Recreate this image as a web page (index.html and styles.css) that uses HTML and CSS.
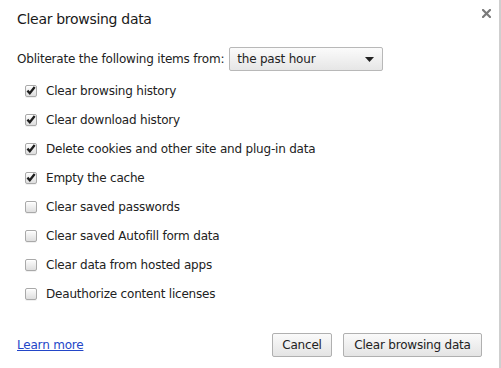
FILE: index.html
```html
<!DOCTYPE html>
<html>
<head>
<meta charset="utf-8">
<link rel="stylesheet" href="styles.css">
</head>
<body>
<div class="dialog">
  <button class="close" aria-label="Close">
    <svg width="9" height="9" viewBox="0 0 9 9"><path d="M1 1 L8 8 M8 1 L1 8" stroke="#7a7a7a" stroke-width="2.2" stroke-linecap="square"/></svg>
  </button>
  <h1 class="title">Clear browsing data</h1>
  <div class="period">
    <span class="period-label">Obliterate the following items from:</span>
    <div class="select">
      <span>the past hour</span>
      <svg class="caret" width="9" height="5" viewBox="0 0 9 5"><path d="M0 0 H9 L4.5 5 Z" fill="#222"/></svg>
    </div>
  </div>
  <ul class="items">
    <li class="item"><span class="box checked"><svg width="10" height="9" viewBox="0 0 10 9"><path d="M1.4 4.6 L3.8 7.2 L8.7 1" fill="none" stroke="#1e1e1e" stroke-width="2.3"/></svg></span>Clear browsing history</li>
    <li class="item"><span class="box checked"><svg width="10" height="9" viewBox="0 0 10 9"><path d="M1.4 4.6 L3.8 7.2 L8.7 1" fill="none" stroke="#1e1e1e" stroke-width="2.3"/></svg></span>Clear download history</li>
    <li class="item"><span class="box checked"><svg width="10" height="9" viewBox="0 0 10 9"><path d="M1.4 4.6 L3.8 7.2 L8.7 1" fill="none" stroke="#1e1e1e" stroke-width="2.3"/></svg></span>Delete cookies and other site and plug-in data</li>
    <li class="item"><span class="box checked"><svg width="10" height="9" viewBox="0 0 10 9"><path d="M1.4 4.6 L3.8 7.2 L8.7 1" fill="none" stroke="#1e1e1e" stroke-width="2.3"/></svg></span>Empty the cache</li>
    <li class="item"><span class="box"></span>Clear saved passwords</li>
    <li class="item"><span class="box"></span>Clear saved Autofill form data</li>
    <li class="item"><span class="box"></span>Clear data from hosted apps</li>
    <li class="item"><span class="box"></span>Deauthorize content licenses</li>
  </ul>
  <div class="footer">
    <a class="learn" href="#">Learn more</a>
    <div class="actions">
      <button class="btn btn-cancel">Cancel</button>
      <button class="btn btn-clear">Clear browsing data</button>
    </div>
  </div>
</div>
</body>
</html>
```
FILE: styles.css
```css
html, body {
  margin: 0;
  padding: 0;
  background: #fff;
}
.dialog {
  position: relative;
  width: 501px;
  height: 368px;
  box-sizing: border-box;
  border-right: 2px solid #cfcfcf;
  padding: 9px 17px 0 17px;
  font-family: "DejaVu Sans", "Liberation Sans", sans-serif;
  font-size: 12px;
  letter-spacing: -0.2px;
  color: #222;
  display: flex;
  flex-direction: column;
}
.close {
  position: absolute;
  top: 9px;
  left: 482px;
  width: 9px;
  height: 9px;
  padding: 0;
  border: 0;
  background: none;
  display: flex;
}
.title {
  margin: 0;
  font-size: 14px;
  letter-spacing: -0.3px;
  font-weight: normal;
  line-height: 20px;
  height: 20px;
  color: #1a1a1a;
}
.period {
  margin-top: 18px;
  display: flex;
  align-items: center;
  height: 24px;
}
.period-label {
  margin-right: 5px;
}
.select {
  width: 154px;
  height: 24px;
  box-sizing: border-box;
  border: 1px solid #b8b8b8;
  border-radius: 2px;
  background: linear-gradient(#fbfbfb, #e6e6e6);
  display: flex;
  align-items: center;
  justify-content: space-between;
  padding: 0 8px 0 7px;
}
.caret {
  display: block;
}
.items {
  list-style: none;
  margin: 5px 0 0 0;
  padding: 0 0 0 8px;
}
.item {
  height: 29px;
  display: flex;
  align-items: center;
}
.box {
  width: 12px;
  height: 12px;
  box-sizing: border-box;
  border: 1px solid #a9a9a9;
  border-radius: 2px;
  background: linear-gradient(#fdfdfd, #dedede);
  margin-right: 9px;
  display: flex;
  align-items: center;
  justify-content: center;
  box-shadow: inset 0 1px 0 #fff, 0 1px 0 rgba(0,0,0,0.06);
}
.footer {
  margin-top: 25px;
  height: 24px;
  display: flex;
  align-items: center;
  justify-content: space-between;
}
.learn {
  color: #2346c8;
  text-decoration: underline;
}
.actions {
  display: flex;
  gap: 11px;
}
.btn {
  height: 24px;
  box-sizing: border-box;
  border: 1px solid #b0b0b0;
  border-radius: 2px;
  background: linear-gradient(#fafafa, #e4e4e4);
  font-family: inherit;
  font-size: 12px;
  letter-spacing: -0.2px;
  color: #222;
  padding: 0;
}
.btn-cancel {
  width: 60px;
}
.btn-clear {
  width: 139px;
}
```
